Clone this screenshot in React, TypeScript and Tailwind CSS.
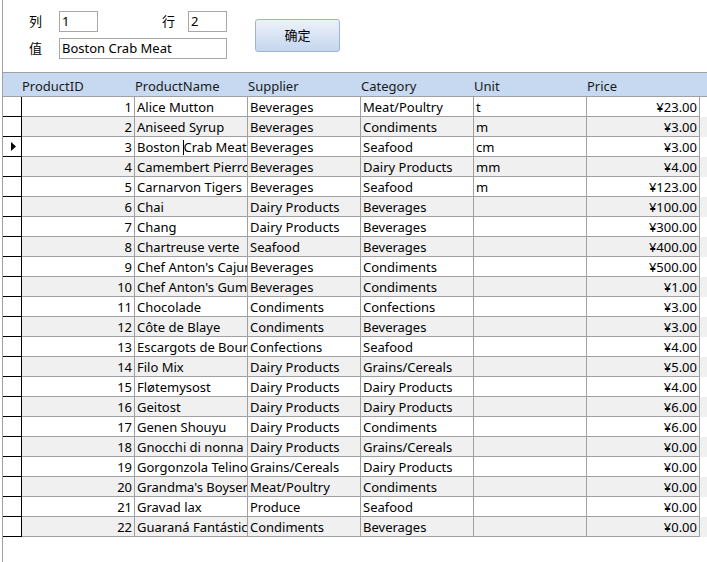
import React from 'react'

const rows: [number, string, string, string, string, string][] = [
  [1, 'Alice Mutton', 'Beverages', 'Meat/Poultry', 't', '¥23.00'],
  [2, 'Aniseed Syrup', 'Beverages', 'Condiments', 'm', '¥3.00'],
  [3, 'Boston Crab Meat', 'Beverages', 'Seafood', 'cm', '¥3.00'],
  [4, 'Camembert Pierrot', 'Beverages', 'Dairy Products', 'mm', '¥4.00'],
  [5, 'Carnarvon Tigers', 'Beverages', 'Seafood', 'm', '¥123.00'],
  [6, 'Chai', 'Dairy Products', 'Beverages', '', '¥100.00'],
  [7, 'Chang', 'Dairy Products', 'Beverages', '', '¥300.00'],
  [8, 'Chartreuse verte', 'Seafood', 'Beverages', '', '¥400.00'],
  [9, "Chef Anton's Cajun Seasoning", 'Beverages', 'Condiments', '', '¥500.00'],
  [10, "Chef Anton's Gumbo Mix", 'Beverages', 'Condiments', '', '¥1.00'],
  [11, 'Chocolade', 'Condiments', 'Confections', '', '¥3.00'],
  [12, 'Côte de Blaye', 'Condiments', 'Beverages', '', '¥3.00'],
  [13, 'Escargots de Bourgogne', 'Confections', 'Seafood', '', '¥4.00'],
  [14, 'Filo Mix', 'Dairy Products', 'Grains/Cereals', '', '¥5.00'],
  [15, 'Fløtemysost', 'Dairy Products', 'Dairy Products', '', '¥4.00'],
  [16, 'Geitost', 'Dairy Products', 'Dairy Products', '', '¥6.00'],
  [17, 'Genen Shouyu', 'Dairy Products', 'Condiments', '', '¥6.00'],
  [18, 'Gnocchi di nonna Alice', 'Dairy Products', 'Grains/Cereals', '', '¥0.00'],
  [19, 'Gorgonzola Telino', 'Grains/Cereals', 'Dairy Products', '', '¥0.00'],
  [20, "Grandma's Boysenberry Spread", 'Meat/Poultry', 'Condiments', '', '¥0.00'],
  [21, 'Gravad lax', 'Produce', 'Seafood', '', '¥0.00'],
  [22, 'Guaraná Fantástica', 'Condiments', 'Beverages', '', '¥0.00'],
]

const headers = ['ProductID', 'ProductName', 'Supplier', 'Category', 'Unit', 'Price']

const cell = 'w-[113px] shrink-0 h-[20px] border-r border-b border-[#a0a0a0] overflow-hidden whitespace-nowrap px-[2px] leading-[21px]'

export default function App() {
  return (
    <div className="w-[707px] h-[562px] bg-white overflow-hidden text-[13px] text-black font-['Noto_Sans','Noto_Sans_CJK_SC',sans-serif]">
      <div className="ml-[2px] h-full border-l border-[#a0a0a0] flex flex-col">
        {/* edit panel */}
        <div className="h-[72px] shrink-0 flex items-start pl-[26px]">
          <div className="pt-[11px] flex flex-col gap-[6px]">
            <div className="flex items-center h-[21px]">
              <span className="w-[30px] pt-[1px]">列</span>
              <div className="w-[39px] h-[21px] border border-[#a8a8a8] px-[2px] leading-[19px]">1</div>
              <span className="ml-[64px] w-[26px] pt-[1px]">行</span>
              <div className="w-[39px] h-[21px] border border-[#a8a8a8] px-[2px] leading-[19px]">2</div>
            </div>
            <div className="flex items-center h-[21px]">
              <span className="w-[30px] pt-[1px]">值</span>
              <div className="w-[168px] h-[21px] border border-[#a8a8a8] px-[2px] leading-[19px] whitespace-nowrap">Boston Crab Meat</div>
            </div>
          </div>
          <button className="ml-[28px] mt-[19px] w-[85px] h-[33px] pt-[1px] rounded-[3px] border border-[#9db4da] bg-linear-to-b from-[#edf2fb] to-[#c5d6ef] text-[13px]">
            确定
          </button>
        </div>

        {/* grid */}
        <div className="h-[25px] shrink-0 border-t border-b border-[#a0a0a0] bg-[#c6d9f0] flex items-center pt-[5px] text-[#1a1a1a]">
          <div className="w-[19px] shrink-0" />
          {headers.map((h) => (
            <div key={h} className="w-[113px] shrink-0 whitespace-nowrap">{h}</div>
          ))}
        </div>
        {rows.map((r, i) => (
          <div key={r[0]} className={`flex ${i % 2 === 1 ? 'bg-[#f0f0f0]' : 'bg-white'}`}>
            <div className="w-[19px] shrink-0 h-[20px] bg-white border-r border-b border-black flex items-center pl-[8px]">
              {r[0] === 3 && (
                <svg width="5" height="9" viewBox="0 0 5 9"><path d="M0 0L5 4.5L0 9Z" fill="#000" /></svg>
              )}
            </div>
            <div className={`${cell} text-right`}>{r[0]}</div>
            <div className={cell}>
              {r[0] === 3 ? (
                <>Boston <span className="inline-block w-px h-[15px] bg-black align-middle -ml-[1px] mb-[2px]" />Crab Meat</>
              ) : (
                r[1]
              )}
            </div>
            <div className={cell}>{r[2]}</div>
            <div className={cell}>{r[3]}</div>
            <div className={cell}>{r[4]}</div>
            <div className={`${cell} text-right`}>{r[5]}</div>
          </div>
        ))}
      </div>
    </div>
  )
}
